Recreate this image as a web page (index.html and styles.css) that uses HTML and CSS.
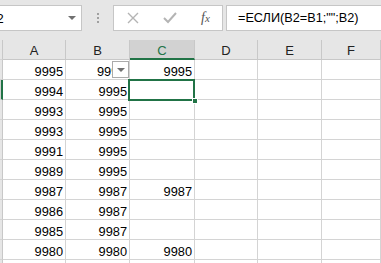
FILE: index.html
```
<!DOCTYPE html>
<html lang="ru">

<head>
    <meta charset="UTF-8">
    <title>Лист1</title>
    <link rel="stylesheet" href="styles.css">
</head>

<body>
    <div class="formulabar">
        <div class="namebox">
            <span class="namevalue">C2</span>
            <span class="namearrow"></span>
        </div>
        <div class="grip">
            <span></span><span></span><span></span>
        </div>
        <div class="buttons">
            <svg class="btn" width="12" height="12" viewBox="0 0 12 12">
                <path d="M1 1 L11 11 M11 1 L1 11" stroke="#b4b4b4" stroke-width="1.4" fill="none" />
            </svg>
            <svg class="btn" width="14" height="12" viewBox="0 0 14 12">
                <path d="M1 6 L5 10 L13 1" stroke="#b4b4b4" stroke-width="2" fill="none" />
            </svg>
            <span class="fx">f<span class="fxsub">x</span></span>
        </div>
        <div class="formula">=ЕСЛИ(B2=B1;"";B2)</div>
    </div>

    <div class="sheet">
        <!-- column headers -->
        <div class="corner"></div>
        <div class="colhead">A</div>
        <div class="colhead">B</div>
        <div class="colhead active">C</div>
        <div class="colhead">D</div>
        <div class="colhead">E</div>
        <div class="colhead">F</div>

        <div class="rowhead"></div>
        <div class="cell">9995</div>
        <div class="cell withfilter">9995<span class="filterbtn"></span></div>
        <div class="cell">9995</div>
        <div class="cell"></div><div class="cell"></div><div class="cell"></div>

        <div class="rowhead active"></div>
        <div class="cell">9994</div>
        <div class="cell">9995</div>
        <div class="cell selected"><span class="selbox"><span class="handle"></span></span></div>
        <div class="cell"></div><div class="cell"></div><div class="cell"></div>

        <div class="rowhead"></div>
        <div class="cell">9993</div>
        <div class="cell">9995</div>
        <div class="cell"></div><div class="cell"></div><div class="cell"></div><div class="cell"></div>

        <div class="rowhead"></div>
        <div class="cell">9993</div>
        <div class="cell">9995</div>
        <div class="cell"></div><div class="cell"></div><div class="cell"></div><div class="cell"></div>

        <div class="rowhead"></div>
        <div class="cell">9991</div>
        <div class="cell">9995</div>
        <div class="cell"></div><div class="cell"></div><div class="cell"></div><div class="cell"></div>

        <div class="rowhead"></div>
        <div class="cell">9989</div>
        <div class="cell">9995</div>
        <div class="cell"></div><div class="cell"></div><div class="cell"></div><div class="cell"></div>

        <div class="rowhead"></div>
        <div class="cell">9987</div>
        <div class="cell">9987</div>
        <div class="cell">9987</div>
        <div class="cell"></div><div class="cell"></div><div class="cell"></div>

        <div class="rowhead"></div>
        <div class="cell">9986</div>
        <div class="cell">9987</div>
        <div class="cell"></div><div class="cell"></div><div class="cell"></div><div class="cell"></div>

        <div class="rowhead"></div>
        <div class="cell">9985</div>
        <div class="cell">9987</div>
        <div class="cell"></div><div class="cell"></div><div class="cell"></div><div class="cell"></div>

        <div class="rowhead"></div>
        <div class="cell">9980</div>
        <div class="cell">9980</div>
        <div class="cell">9980</div>
        <div class="cell"></div><div class="cell"></div><div class="cell"></div>

        <div class="rowhead"></div>
        <div class="cell"></div><div class="cell"></div><div class="cell"></div>
        <div class="cell"></div><div class="cell"></div><div class="cell"></div>
    </div>
</body>

</html>
```

FILE: styles.css
```
body {
    margin: 0;
    padding: 0;
    width: 381px;
    height: 263px;
    overflow: hidden;
    background-color: #ffffff;
    font-family: "Liberation Sans", Arial, sans-serif;
    font-size: 12.8px;
    color: #000000;
}

.formulabar {
    display: flex;
    align-items: flex-start;
    height: 40px;
    padding-top: 5px;
    box-sizing: border-box;
    background-color: #e6e6e6;
}

.namebox {
    display: flex;
    align-items: center;
    justify-content: space-between;
    width: 100px;
    height: 26px;
    margin-left: -18px;
    padding: 0 5px 0 4px;
    box-sizing: border-box;
    background-color: #ffffff;
    border: 1px solid #c6c6c6;
}

.namevalue {
    font-size: 13px;
}

.namearrow {
    width: 0;
    height: 0;
    border-left: 4px solid transparent;
    border-right: 4px solid transparent;
    border-top: 4px solid #707070;
}

.grip {
    display: flex;
    flex-direction: column;
    align-items: center;
    gap: 2px;
    width: 31px;
    padding-top: 8px;
    padding-left: 1px;
    box-sizing: border-box;
}

.grip span {
    width: 2px;
    height: 2px;
    background-color: #a0a0a0;
}

.buttons {
    display: flex;
    align-items: center;
    width: 110px;
    height: 26px;
    padding-left: 13px;
    box-sizing: border-box;
    background-color: #ffffff;
    border: 1px solid #c6c6c6;
}

.btn {
    margin-right: 24px;
}

.fx {
    font-family: "Liberation Serif", "Times New Roman", serif;
    font-style: italic;
    font-size: 14px;
    color: #555555;
}

.fxsub {
    font-size: 11px;
}

.formula {
    flex: 1;
    height: 26px;
    margin-left: 3px;
    margin-right: -10px;
    padding-left: 11px;
    box-sizing: border-box;
    background-color: #ffffff;
    border: 1px solid #c6c6c6;
    line-height: 24px;
    font-size: 12.7px;
}

.sheet {
    display: grid;
    grid-template-columns: 3px 63px 64px 65px 63px 64px 1fr;
    grid-auto-rows: 20px;
}

.corner,
.rowhead {
    background-color: #e6e6e6;
    border-right: 1px solid #c8c8c8;
    border-bottom: 1px solid #d4d4d4;
    box-sizing: border-box;
}

.rowhead.active {
    background-color: #d2d2d2;
    border-right: 2px solid #217346;
}

.colhead {
    display: flex;
    align-items: center;
    justify-content: center;
    background-color: #e6e6e6;
    border-right: 1px solid #c8c8c8;
    border-bottom: 1px solid #c8c8c8;
    box-sizing: border-box;
    color: #222222;
    padding-top: 1px;
    font-size: 13px;
}

.colhead.active {
    background-color: #d2d2d2;
    border-bottom: 2px solid #217346;
    color: #217346;
    padding-top: 2px;
}

.cell {
    display: flex;
    align-items: flex-end;
    justify-content: flex-end;
    padding-right: 2px;
    box-sizing: border-box;
    border-right: 1px solid #d4d4d4;
    border-bottom: 1px solid #d4d4d4;
    line-height: 15px;
    white-space: nowrap;
    overflow: hidden;
}

.withfilter {
    position: relative;
    justify-content: flex-start;
    padding-left: 31px;
    overflow: visible;
}

.filterbtn {
    position: absolute;
    left: 46px;
    top: 1px;
    width: 17px;
    height: 17px;
    box-sizing: border-box;
    background-color: #ffffff;
    border: 1px solid #ababab;
    display: flex;
    align-items: center;
    justify-content: center;
}

.filterbtn::after {
    content: "";
    width: 0;
    height: 0;
    border-left: 4px solid transparent;
    border-right: 4px solid transparent;
    border-top: 4px solid #707070;
}

.selected {
    position: relative;
    overflow: visible;
}

.selbox {
    position: absolute;
    left: -2px;
    top: -1px;
    width: 67px;
    height: 22px;
    box-sizing: border-box;
    border: 2px solid #217346;
}

.handle {
    position: absolute;
    right: -5px;
    bottom: -5px;
    width: 6px;
    height: 6px;
    box-sizing: border-box;
    background-color: #217346;
    border: 1px solid #ffffff;
}
```
